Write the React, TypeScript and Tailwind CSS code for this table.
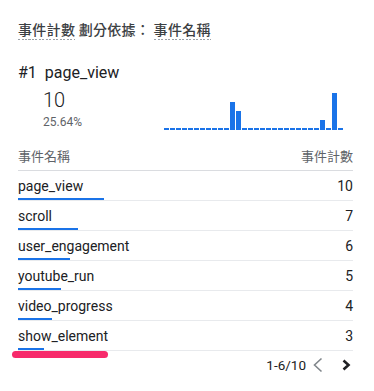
import React from "react";

const rows = [
  { name: "page_view", v: 10 },
  { name: "scroll", v: 7 },
  { name: "user_engagement", v: 6 },
  { name: "youtube_run", v: 5 },
  { name: "video_progress", v: 4 },
  { name: "show_element", v: 3 },
];

const series: number[] = Array.from({ length: 30 }, () => 0);
series[11] = 3;
series[12] = 2;
series[26] = 1;
series[28] = 4;

function Dashed({ children }: { children: React.ReactNode }) {
  return (
    <span className="inline-flex flex-col">
      <span className="leading-[20px]">{children}</span>
      <span className="block h-[1px] w-full bg-[repeating-linear-gradient(to_right,#9aa0a6_0_2px,transparent_2px_3.5px)]" />
    </span>
  );
}

export default function App() {
  const cjk = { fontFamily: '"Noto Sans CJK TC", "Noto Sans", sans-serif' };
  return (
    <div
      className="relative w-[374px] h-[391px] bg-white pl-[18px] pr-[21px] pt-[19px] text-[#202124] overflow-hidden"
      style={{ fontFamily: 'Roboto, "Noto Sans CJK TC", sans-serif' }}
    >
      {/* Title */}
      <div className="flex items-start text-[14px] tracking-[0.3px] font-medium text-[#3c4043] h-[21px]" style={cjk}>
        <Dashed>事件計數</Dashed>
        <span className="leading-[20px] whitespace-pre"> 劃分依據： </span>
        <Dashed>事件名稱</Dashed>
      </div>

      {/* #1 */}
      <div className="mt-[21px] flex text-[16px] leading-[24px] text-[#202124]">
        <span>#1</span>
        <span className="ml-[8px]">page_view</span>
      </div>

      <div className="flex items-end">
        <div className="w-[146px] pl-[25px] flex flex-col">
          <div className="mt-[1px] text-[20px] leading-[28px] font-light text-[#202124]">10</div>
          <div className="text-[12px] leading-[16px] text-[#5f6368]">25.64%</div>
        </div>
        <div className="flex items-end gap-[1px] h-[44px]">
          {series.map((v, i) => (
            <div
              key={i}
              className="w-[5px] bg-[#1a73e8]"
              style={{ height: v === 0 ? 2 : v * 9 + 1 }}
            />
          ))}
        </div>
      </div>

      {/* Table header */}
      <div
        className="mt-[16px] flex justify-between text-[13px] leading-[20px] text-[#5f6368] pb-[4px] border-b border-[#dadce0]"
        style={cjk}
      >
        <span>事件名稱</span>
        <span>事件計數</span>
      </div>

      {rows.map((r) => (
        <div key={r.name} className="border-b border-[#e8eaed] pt-[5px]">
          <div className="flex justify-between text-[14px] leading-[20px] text-[#202124]">
            <span>{r.name}</span>
            <span>{r.v}</span>
          </div>
          <div className="mt-[2px] h-[2px] bg-[#1a73e8]" style={{ width: r.v * 8.6 }} />
        </div>
      ))}

      {/* Pagination */}
      <div className="mt-[4px] flex items-center justify-end">
        <span className="text-[13.5px] leading-[20px] text-[#202124]">1-6/10</span>
        <svg width="20" height="20" viewBox="0 0 20 20" className="ml-[2px]">
          <polyline points="13.5,3.5 6.5,10 13.5,16.5" fill="none" stroke="#80868b" strokeWidth="1.6" />
        </svg>
        <svg width="20" height="20" viewBox="0 0 20 20" className="ml-[6px] -mr-[1px]">
          <polyline points="9.5,5.5 14.5,10 9.5,14.5" fill="none" stroke="#202124" strokeWidth="2.6" />
        </svg>
      </div>

      {/* Highlight annotation */}
      <div className="absolute left-[12px] top-[351px] w-[96px] h-[7px] rounded-full bg-[#f72a6b]" />
    </div>
  );
}
